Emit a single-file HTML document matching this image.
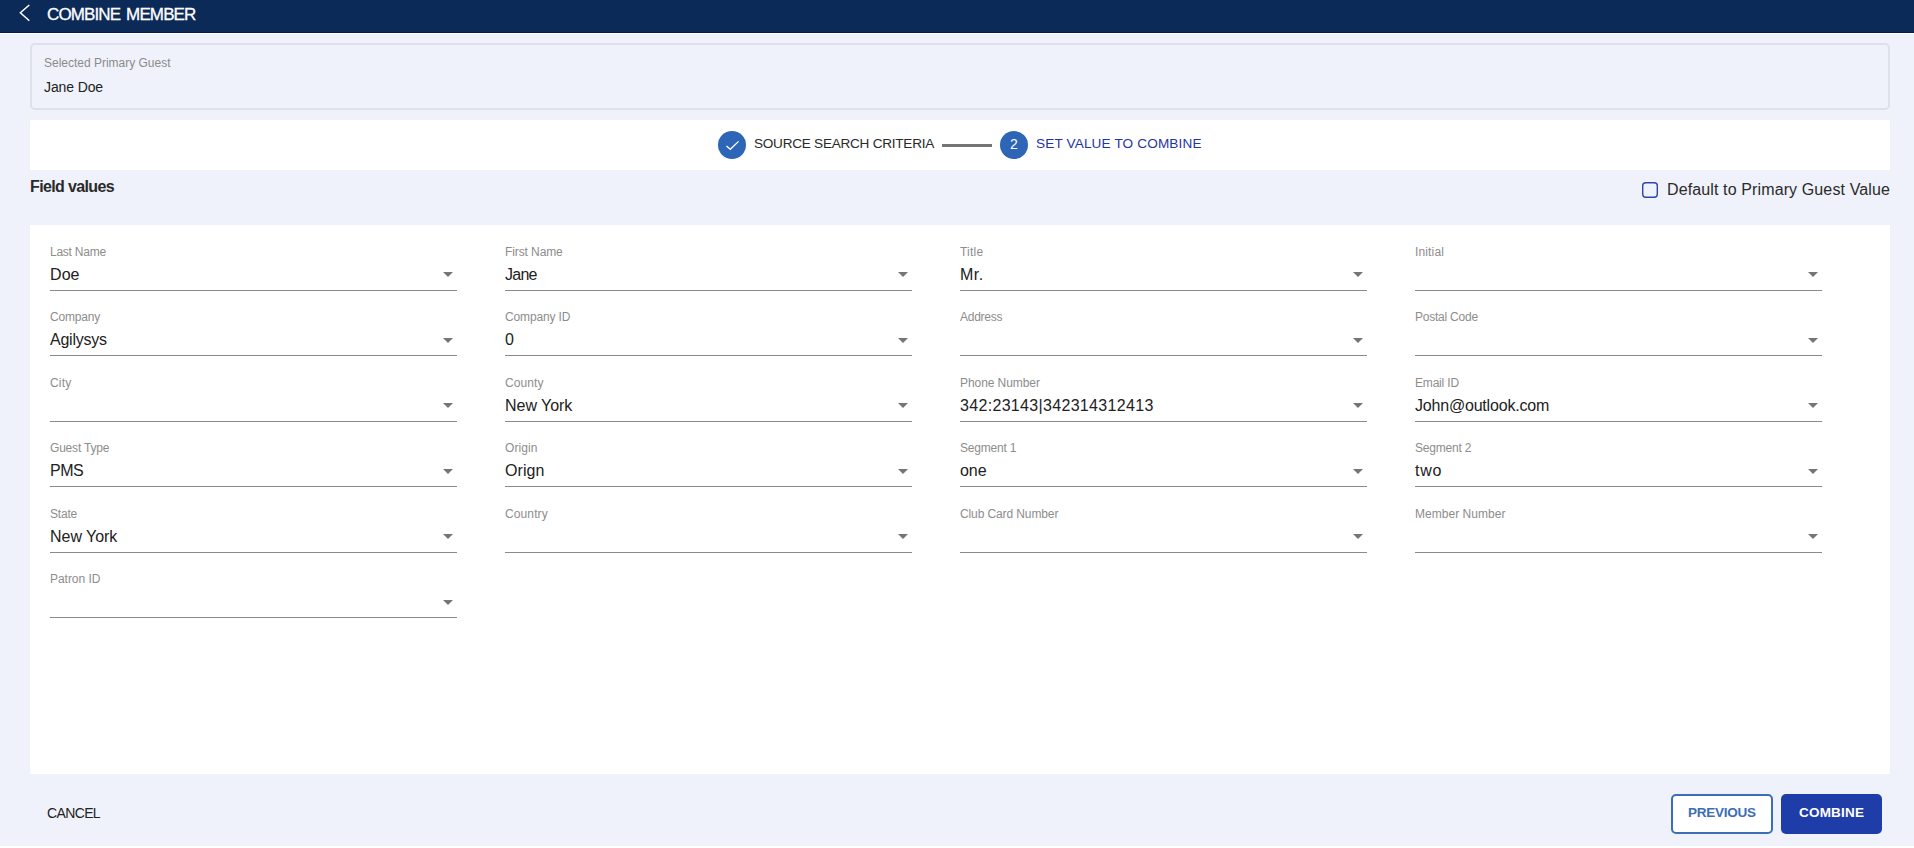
<!DOCTYPE html>
<html><head><meta charset="utf-8">
<style>
*{box-sizing:border-box;margin:0;padding:0}
html,body{width:1914px;height:848px;overflow:hidden;background:#fff}
body{position:relative;font-family:"Liberation Sans",sans-serif;}
.abs{position:absolute}
#bg{position:absolute;left:0;top:34px;width:1914px;height:812px;background:#eff2fa}
#hdr{position:absolute;left:0;top:0;width:1914px;height:33px;background:#0b2a57;border-bottom:1px solid #021c4a}
#hdr .t{position:absolute;left:47px;top:5px;font-size:17px;line-height:20px;color:#fff;letter-spacing:-0.871px;word-spacing:2px;white-space:nowrap;-webkit-text-stroke:0.3px #fff}
#card{position:absolute;left:30px;top:43px;width:1860px;height:67px;border:2px solid #dfe1e6;border-radius:5px;background:#eff2fa}
#card .l{position:absolute;left:12px;top:11px;font-size:12px;line-height:14px;color:#8b8b8b;white-space:nowrap;letter-spacing:-0.01px}
#card .v{position:absolute;left:12px;top:34px;font-size:14px;line-height:16px;color:#222;white-space:nowrap;letter-spacing:-0.117px}
#step{position:absolute;left:30px;top:120px;width:1860px;height:50px;background:#fff}
.circ{position:absolute;width:28px;height:28px;border-radius:50%;background:#2d65b7;color:#fff;font-size:14px;line-height:26px;text-align:center}
.stt{position:absolute;font-size:13.6px;line-height:16px;white-space:nowrap}
#fv{position:absolute;left:30px;top:177px;font-size:16px;line-height:20px;font-weight:bold;color:#2a2a2a;letter-spacing:-0.633px;white-space:nowrap}
#cb{position:absolute;left:1641px;top:181px}
#cbt{position:absolute;left:1667px;top:180px;font-size:16px;line-height:20px;color:#2a2a2a;white-space:nowrap;letter-spacing:0.121px}
#panel{position:absolute;left:30px;top:225px;width:1860px;height:549px;background:#fff}
.fld{position:absolute;width:407px;height:60px}
.fld .lab{position:absolute;left:0;top:5px;font-size:12px;line-height:14px;color:#8d8d8d;white-space:nowrap}
.fld .val{position:absolute;left:0;top:26px;font-size:16px;line-height:18px;color:#212121;white-space:nowrap}
.fld .ul{position:absolute;left:0;top:50px;width:407px;height:1px;background:#8a8a8a}
.fld .arr{position:absolute;left:393px;display:block}
#cancel{position:absolute;left:47px;top:805px;font-size:14px;line-height:16px;color:#222;white-space:nowrap;letter-spacing:-0.633px}
#prev{position:absolute;left:1671px;top:794px;width:102px;height:40px;border:2px solid #3d6db5;border-radius:5px;background:#fff;color:#3d6db5;font-size:13.5px;font-weight:bold;line-height:34px;text-align:center;white-space:nowrap;letter-spacing:-0.273px;text-indent:-0.273px}
#comb{position:absolute;left:1781px;top:794px;width:101px;height:40px;border-radius:5px;background:#1f3da8;color:#fff;font-size:13.5px;font-weight:bold;line-height:38px;text-align:center;white-space:nowrap;letter-spacing:0.207px;text-indent:0.207px}
</style></head><body>
<div id="bg"></div>
<div id="hdr">
<svg class="abs" style="left:19px;top:4px" width="12" height="18" viewBox="0 0 12 18"><path d="M10.3 1 L1.4 8.8 L10.3 16.8" fill="none" stroke="#fff" stroke-width="1.5"/></svg>
<div class="t">COMBINE MEMBER</div>
</div>
<div id="card"><div class="l">Selected Primary Guest</div><div class="v">Jane Doe</div></div>
<div id="step">
<div class="circ" style="left:688px;top:11px"><svg style="position:absolute;left:7px;top:8px" width="16" height="14" viewBox="0 0 16 14"><path d="M1.5 6.9 L5.3 10.3 L13.6 2.4" fill="none" stroke="#fff" stroke-width="1.3"/></svg></div>
<div class="stt" style="left:724px;top:16px;color:#2a2a2a;letter-spacing:-0.264px">SOURCE SEARCH CRITERIA</div>
<div class="abs" style="left:912px;top:24px;width:50px;height:3px;background:#757575"></div>
<div class="circ" style="left:970px;top:11px">2</div>
<div class="stt" style="left:1006px;top:16px;color:#1f35a6;letter-spacing:0.134px">SET VALUE TO COMBINE</div>
</div>
<div id="fv">Field values</div>
<svg id="cb" width="18" height="18" viewBox="0 0 18 18"><rect x="1.7" y="1.7" width="14.6" height="14.6" rx="3" fill="none" stroke="#2e44b0" stroke-width="1.4"/></svg>
<div id="cbt">Default to Primary Guest Value</div>
<div id="panel"></div>
<div class="fld" style="left:50px;top:240px"><div class="lab" style="letter-spacing:-0.241px">Last Name</div><div class="val" style="letter-spacing:0.073px">Doe</div><div class="ul"></div><svg class="arr" style="top:32px" width="10" height="5" viewBox="0 0 10 5"><path d="M0 0H10L5 5Z" fill="#757575"/></svg></div>
<div class="fld" style="left:505px;top:240px"><div class="lab" style="letter-spacing:-0.097px">First Name</div><div class="val" style="letter-spacing:-0.73px">Jane</div><div class="ul"></div><svg class="arr" style="top:32px" width="10" height="5" viewBox="0 0 10 5"><path d="M0 0H10L5 5Z" fill="#757575"/></svg></div>
<div class="fld" style="left:960px;top:240px"><div class="lab" style="letter-spacing:0.234px">Title</div><div class="val" style="letter-spacing:0.5px">Mr.</div><div class="ul"></div><svg class="arr" style="top:32px" width="10" height="5" viewBox="0 0 10 5"><path d="M0 0H10L5 5Z" fill="#757575"/></svg></div>
<div class="fld" style="left:1415px;top:240px"><div class="lab" style="letter-spacing:0.147px">Initial</div><div class="ul"></div><svg class="arr" style="top:32px" width="10" height="5" viewBox="0 0 10 5"><path d="M0 0H10L5 5Z" fill="#757575"/></svg></div>
<div class="fld" style="left:50px;top:305px"><div class="lab" style="letter-spacing:-0.194px">Company</div><div class="val" style="letter-spacing:-0.25px">Agilysys</div><div class="ul"></div><svg class="arr" style="top:32.5px" width="10" height="5" viewBox="0 0 10 5"><path d="M0 0H10L5 5Z" fill="#757575"/></svg></div>
<div class="fld" style="left:505px;top:305px"><div class="lab" style="letter-spacing:-0.144px">Company ID</div><div class="val" style="letter-spacing:0.375px">0</div><div class="ul"></div><svg class="arr" style="top:32.5px" width="10" height="5" viewBox="0 0 10 5"><path d="M0 0H10L5 5Z" fill="#757575"/></svg></div>
<div class="fld" style="left:960px;top:305px"><div class="lab" style="letter-spacing:-0.248px">Address</div><div class="ul"></div><svg class="arr" style="top:32.5px" width="10" height="5" viewBox="0 0 10 5"><path d="M0 0H10L5 5Z" fill="#757575"/></svg></div>
<div class="fld" style="left:1415px;top:305px"><div class="lab" style="letter-spacing:-0.232px">Postal Code</div><div class="ul"></div><svg class="arr" style="top:32.5px" width="10" height="5" viewBox="0 0 10 5"><path d="M0 0H10L5 5Z" fill="#757575"/></svg></div>
<div class="fld" style="left:50px;top:371px"><div class="lab" style="letter-spacing:0.18px">City</div><div class="ul"></div><svg class="arr" style="top:32px" width="10" height="5" viewBox="0 0 10 5"><path d="M0 0H10L5 5Z" fill="#757575"/></svg></div>
<div class="fld" style="left:505px;top:371px"><div class="lab" style="letter-spacing:0.078px">County</div><div class="val" style="letter-spacing:-0.035px">New York</div><div class="ul"></div><svg class="arr" style="top:32px" width="10" height="5" viewBox="0 0 10 5"><path d="M0 0H10L5 5Z" fill="#757575"/></svg></div>
<div class="fld" style="left:960px;top:371px"><div class="lab" style="letter-spacing:-0.074px">Phone Number</div><div class="val" style="letter-spacing:0.32px">342:23143|342314312413</div><div class="ul"></div><svg class="arr" style="top:32px" width="10" height="5" viewBox="0 0 10 5"><path d="M0 0H10L5 5Z" fill="#757575"/></svg></div>
<div class="fld" style="left:1415px;top:371px"><div class="lab" style="letter-spacing:-0.184px">Email ID</div><div class="val" style="letter-spacing:-0.196px">John@outlook.com</div><div class="ul"></div><svg class="arr" style="top:32px" width="10" height="5" viewBox="0 0 10 5"><path d="M0 0H10L5 5Z" fill="#757575"/></svg></div>
<div class="fld" style="left:50px;top:436px"><div class="lab" style="letter-spacing:-0.195px">Guest Type</div><div class="val" style="letter-spacing:-0.505px">PMS</div><div class="ul"></div><svg class="arr" style="top:32.5px" width="10" height="5" viewBox="0 0 10 5"><path d="M0 0H10L5 5Z" fill="#757575"/></svg></div>
<div class="fld" style="left:505px;top:436px"><div class="lab" style="letter-spacing:0.091px">Origin</div><div class="val" style="letter-spacing:0.087px">Orign</div><div class="ul"></div><svg class="arr" style="top:32.5px" width="10" height="5" viewBox="0 0 10 5"><path d="M0 0H10L5 5Z" fill="#757575"/></svg></div>
<div class="fld" style="left:960px;top:436px"><div class="lab" style="letter-spacing:-0.205px">Segment 1</div><div class="val" style="letter-spacing:-0.083px">one</div><div class="ul"></div><svg class="arr" style="top:32.5px" width="10" height="5" viewBox="0 0 10 5"><path d="M0 0H10L5 5Z" fill="#757575"/></svg></div>
<div class="fld" style="left:1415px;top:436px"><div class="lab" style="letter-spacing:-0.205px">Segment 2</div><div class="val" style="letter-spacing:0.786px">two</div><div class="ul"></div><svg class="arr" style="top:32.5px" width="10" height="5" viewBox="0 0 10 5"><path d="M0 0H10L5 5Z" fill="#757575"/></svg></div>
<div class="fld" style="left:50px;top:502px"><div class="lab" style="letter-spacing:-0.197px">State</div><div class="val" style="letter-spacing:-0.035px">New York</div><div class="ul"></div><svg class="arr" style="top:32px" width="10" height="5" viewBox="0 0 10 5"><path d="M0 0H10L5 5Z" fill="#757575"/></svg></div>
<div class="fld" style="left:505px;top:502px"><div class="lab" style="letter-spacing:0.118px">Country</div><div class="ul"></div><svg class="arr" style="top:32px" width="10" height="5" viewBox="0 0 10 5"><path d="M0 0H10L5 5Z" fill="#757575"/></svg></div>
<div class="fld" style="left:960px;top:502px"><div class="lab" style="letter-spacing:-0.11px">Club Card Number</div><div class="ul"></div><svg class="arr" style="top:32px" width="10" height="5" viewBox="0 0 10 5"><path d="M0 0H10L5 5Z" fill="#757575"/></svg></div>
<div class="fld" style="left:1415px;top:502px"><div class="lab" style="letter-spacing:0.032px">Member Number</div><div class="ul"></div><svg class="arr" style="top:32px" width="10" height="5" viewBox="0 0 10 5"><path d="M0 0H10L5 5Z" fill="#757575"/></svg></div>
<div class="fld" style="left:50px;top:567px"><div class="lab" style="letter-spacing:-0.035px">Patron ID</div><div class="ul"></div><svg class="arr" style="top:32.5px" width="10" height="5" viewBox="0 0 10 5"><path d="M0 0H10L5 5Z" fill="#757575"/></svg></div>
<div id="cancel">CANCEL</div>
<div id="prev">PREVIOUS</div>
<div id="comb">COMBINE</div>
</body></html>
